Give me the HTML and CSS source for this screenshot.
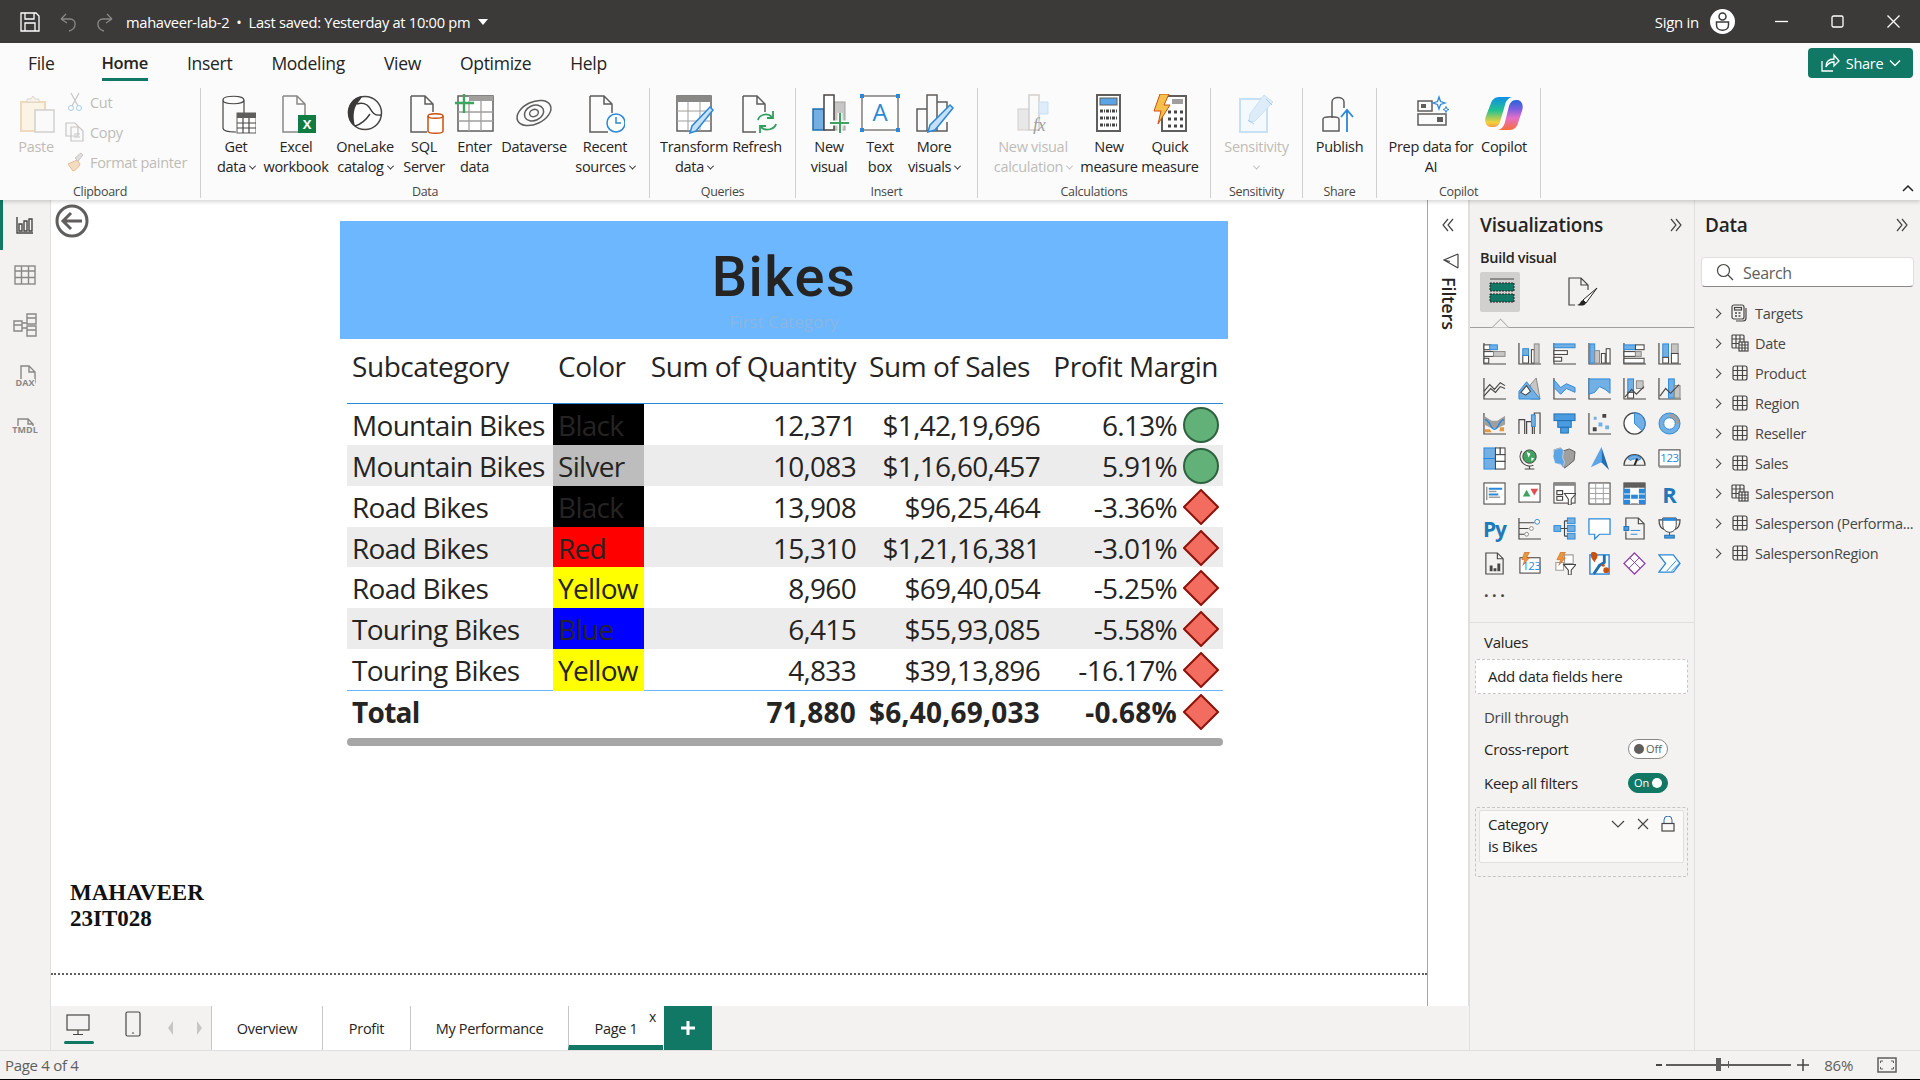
FILE: index.html
```html
<!DOCTYPE html>
<html lang="en">
<head>
  <meta charset="utf8"/>
  <title>mahaveer-lab-2</title>
  <link rel="stylesheet" href="styles.css">
</head>
<body>
<svg class="defs" width="0" height="0">
  <defs>
    <symbol id="tbl" viewBox="0 0 16 16"><rect class="d" x="1" y="1" width="14" height="14" rx="2"/><path class="d" d="M1 5.5h14M1 10.5h14M5.5 1v14M10.5 1v14"/></symbol>
    <symbol id="tcalc" viewBox="0 0 18 18"><rect class="d" x="1" y="1" width="12" height="13" rx="1"/><path class="d" d="M1 5h12M1 9.500h12M5 1v13M9 1v13"/><rect class="wd" x="8" y="8" width="9" height="9"/><path class="d" d="M8 11h9M8 14h9M11 8v9M14 8v9"/></symbol>
    <symbol id="dbl" viewBox="0 0 16 16"><path class="d" d="M3 2l5 6-5 6M8 2l5 6-5 6"/></symbol>
    <symbol id="ok" viewBox="0 0 36 36"><circle cx="18" cy="18" r="17" fill="#61b178" stroke="#2f6241" stroke-width="2"/></symbol>
    <symbol id="bad" viewBox="0 0 36 36"><path d="M18 1l17 17-17 17L1 18z" fill="#f26d5f" stroke="#8f1209" stroke-width="2"/></symbol>
    <linearGradient id="copl" x1="0" y1="0" x2="0" y2="1"><stop offset="0" stop-color="#0e8fe8"/><stop offset=".45" stop-color="#24c28f"/><stop offset=".85" stop-color="#f5d13c"/><stop offset="1" stop-color="#f59a4a"/></linearGradient>
    <linearGradient id="copr" x1="0" y1="0" x2="0" y2="1"><stop offset="0" stop-color="#2563d8"/><stop offset=".3" stop-color="#7a5fe0"/><stop offset=".6" stop-color="#e56fc8"/><stop offset="1" stop-color="#f5703a"/></linearGradient>
  </defs>
</svg>

<div class="app">
  <header class="titlebar">
    <svg class="t-save" width="20" height="20" viewBox="0 0 20 20"><path class="tw" d="M1 1h15l3 3v15H1zM5 1v6h9V1M5 19v-8h10v8"/></svg>
    <svg class="t-undo" width="16" height="20" viewBox="0 0 16 20"><path class="tg" d="M1 7l5-5M1 7l6 4M1 7h9c7 0 7 10-1 12"/></svg>
    <svg class="t-redo" width="16" height="20" viewBox="0 0 16 20"><path class="tg" d="M15 7l-5-5M15 7l-6 4M15 7H6c-7 0-7 10 1 12"/></svg>
    <span class="t-name">mahaveer-lab-2 &nbsp;•&nbsp; Last saved: Yesterday at 10:00 pm</span>
    <span class="t-caret"></span>
    <span class="t-sign">Sign in</span>
    <svg class="t-user" width="25" height="25" viewBox="0 0 25 25"><circle cx="12.500" cy="12.500" r="12.500" fill="#fff"/><circle cx="12.500" cy="7.500" r="3.500" fill="none" stroke="#3b3a39" stroke-width="1.500"/><path d="M6.500 13h12v3c0 7-12 7-12 0z" fill="none" stroke="#3b3a39" stroke-width="1.500"/></svg>
    <svg class="t-min" width="13" height="13" viewBox="0 0 13 13"><path class="tw" d="M0 6.500h13"/></svg>
    <svg class="t-max" width="13" height="13" viewBox="0 0 13 13"><rect class="tw" x="1" y="1" width="11" height="11" rx="1.500"/></svg>
    <svg class="t-close" width="13" height="13" viewBox="0 0 13 13"><path class="tw" d="M.5.500l12 12M12.500.500l-12 12"/></svg>
  </header>

  <section class="ribbon">
    <nav class="rtabs">
      <span class="rtab rtab-file">File</span>
      <span class="rtab on">Home</span>
      <span class="rtab">Insert</span>
      <span class="rtab">Modeling</span>
      <span class="rtab">View</span>
      <span class="rtab">Optimize</span>
      <span class="rtab">Help</span>
      <button class="share">
        <svg width="20" height="20" viewBox="0 0 20 20"><path class="tw" d="M2 8v10h11M6 14c0-6 4-8 8-8V2l5 6-5 5V9c-3 0-6 1-8 5z"/></svg>
        Share
        <svg width="12" height="12" viewBox="0 0 12 12"><path class="tw" d="M1 3.500l5 5 5-5"/></svg>
      </button>
    </nav>
    <div class="groups">
      <div class="grp g-clip">
        <div class="grp-body">
          <div class="item off w40">
            <svg class="ic" width="40" height="40" viewBox="0 0 40 40"><rect x="5" y="8" width="24" height="29" fill="#fbf3e6" stroke="#efd9b8" stroke-width="2"/><path d="M11 8V5h4l2-3 2 3h4v3z" fill="#fbf3e6" stroke="#d8d6d4"/><rect x="19" y="16" width="19" height="22" fill="#fafafa" stroke="#d2d0ce" stroke-width="1.500"/></svg>
            <span class="ln">Paste</span>
          </div>
          <div class="minis off">
            <div class="mini"><svg width="20" height="20" viewBox="0 0 20 20"><path d="M6 1l7 13M14 1L7 14" fill="none" stroke="#c8c6c4" stroke-width="1.200"/><circle cx="6" cy="16" r="2.500" fill="none" stroke="#a9cbe6"/><circle cx="14" cy="16" r="2.500" fill="none" stroke="#a9cbe6"/></svg>Cut</div>
            <div class="mini"><svg width="20" height="20" viewBox="0 0 20 20"><path d="M1 1h9l3 3v10H1z M6 5h8l4 4v10H6z" fill="#fafafa" stroke="#c8c6c4" stroke-width="1.200"/><path d="M9 12h6M9 15h6" stroke="#c8c6c4"/></svg>Copy</div>
            <div class="mini"><svg width="20" height="20" viewBox="0 0 20 20"><path d="M12 8l-9 4 5 7c3-1 6-4 7-7z" fill="#f3dcc0" stroke="#e6bd92"/><path d="M13 9l5-6-2-2-6 5z" fill="#e1dfdd" stroke="#c8c6c4"/></svg>Format painter</div>
          </div>
        </div>
        <div class="grp-label">Clipboard</div>
      </div>

      <div class="grp g-data">
        <div class="grp-body">
          <div class="item w50">
            <svg class="ic" width="40" height="40" viewBox="0 0 40 40"><path class="k" d="M7 6c0-5 21-5 21 0M7 6c0 5 21 5 21 0M28 6v13M7 6v28c0 3 7 4 13 4"/><rect x="21" y="19" width="19" height="20" fill="#fff" stroke="#605e5c"/><rect x="21" y="19" width="19" height="5" fill="#605e5c"/><path class="k" d="M27 24v15M33 24v15M21 29h19M21 34h19"/></svg>
            <span class="ln">Get</span><span class="ln">data<i class="dn"></i></span>
          </div>
          <div class="item w70">
            <svg class="ic" width="40" height="40" viewBox="0 0 40 40"><path d="M7 2h14l8 8v12M7 2v36h15M21 2v8h8" fill="none" stroke="#8a8886" stroke-width="1.500"/><rect x="22" y="21" width="18" height="18" fill="#107c41"/><text class="xl" x="31" y="35">X</text></svg>
            <span class="ln">Excel</span><span class="ln">workbook</span>
          </div>
          <div class="item w68">
            <svg class="ic" width="40" height="40" viewBox="0 0 40 40"><circle cx="20" cy="19" r="16.500" fill="#fff" stroke="#484644" stroke-width="1.500"/><path d="M17 2C8 3 2 11 3 21c1 5 4 9 7 11-2-8-2-16 2-22 2-3 5-6 5-8z" fill="#3b3a39"/><path d="M12 10c5-2 10 0 12 3 3 5 5 9 12 8M10 32c7-2 11-6 15-12" fill="none" stroke="#3b3a39" stroke-width="1.400"/></svg>
            <span class="ln">OneLake</span><span class="ln">catalog<i class="dn"></i></span>
          </div>
          <div class="item w50">
            <svg class="ic" width="40" height="40" viewBox="0 0 40 40"><path class="k2" d="M7 2h14l8 8v8M7 2v36h16M21 2v8h8"/><path d="M24 22c0-3 15-3 15 0v15c0 3-15 3-15 0z" fill="#fff" stroke="#ca5010" stroke-width="1.500"/><path d="M24 22c0 3 15 3 15 0" fill="none" stroke="#ca5010" stroke-width="1.500"/></svg>
            <span class="ln">SQL</span><span class="ln">Server</span>
          </div>
          <div class="item w51">
            <svg class="ic" width="40" height="40" viewBox="0 0 40 40"><rect x="3" y="2" width="35" height="35" fill="#fff" stroke="#605e5c" stroke-width="1.500"/><rect x="14" y="2" width="24" height="5" fill="#a19f9d"/><path d="M3 18h35M3 27h35M14 7v30M26 7v30" fill="none" stroke="#a19f9d" stroke-width="1.300"/><path d="M0 9h19M9 0v19" stroke="#3fa45f" stroke-width="2.400"/></svg>
            <span class="ln">Enter</span><span class="ln">data</span>
          </div>
          <div class="item w68">
            <svg class="ic" width="40" height="40" viewBox="0 0 40 40"><g transform="rotate(-25 20 19)" fill="none" stroke="#605e5c" stroke-width="1.500"><ellipse cx="20" cy="19" rx="18" ry="11"/><ellipse cx="20" cy="19" rx="10" ry="7.500"/><ellipse cx="20" cy="19" rx="4.500" ry="3.500"/></g></svg>
            <span class="ln">Dataverse</span>
          </div>
          <div class="item w74">
            <svg class="ic" width="40" height="40" viewBox="0 0 40 40"><path class="k2" d="M5 2h14l8 8v9M5 2v36h18M19 2v8h8"/><circle cx="31" cy="29" r="9" fill="#fff" stroke="#2b88d8" stroke-width="1.500"/><path d="M31 23v6h5" fill="none" stroke="#2b88d8" stroke-width="1.500"/></svg>
            <span class="ln">Recent</span><span class="ln">sources<i class="dn"></i></span>
          </div>
        </div>
        <div class="grp-label">Data</div>
      </div>

      <div class="grp g-query">
        <div class="grp-body">
          <div class="item w76">
            <svg class="ic" width="40" height="40" viewBox="0 0 40 40"><rect x="3" y="2" width="34" height="35" fill="#fff" stroke="#605e5c" stroke-width="1.500"/><rect x="3" y="2" width="34" height="6" fill="#8a8886"/><path d="M3 17h34M3 27h34M14 8v29M26 8v29" fill="none" stroke="#a19f9d"/><path d="M36 13l3 3-17 21-6 2 2-7z" fill="#c7e0f4" stroke="#2b88d8" stroke-width="1.500"/></svg>
            <span class="ln">Transform</span><span class="ln">data<i class="dn"></i></span>
          </div>
          <div class="item w50">
            <svg class="ic" width="40" height="40" viewBox="0 0 40 40"><path class="k2" d="M6 2h14l8 8v8M6 2v36h13M20 2v8h8"/><path d="M21 26c1-5 9-8 14-3M39 30c-1 5-10 8-15 3" fill="none" stroke="#2f9e5f" stroke-width="1.800"/><path d="M36 17v7h-6M23 39v-7h6" fill="none" stroke="#2f9e5f" stroke-width="1.800"/></svg>
            <span class="ln">Refresh</span>
          </div>
        </div>
        <div class="grp-label">Queries</div>
      </div>

      <div class="grp g-insert">
        <div class="grp-body">
          <div class="item w46">
            <svg class="ic" width="40" height="40" viewBox="0 0 40 40"><rect x="25" y="8" width="11" height="28" fill="#c8c6c4" stroke="#a19f9d"/><rect x="4" y="15" width="11" height="21" fill="#71afe5" stroke="#1f6fb2" stroke-width="1.500"/><rect x="15" y="1" width="10" height="35" fill="#fff" stroke="#484644" stroke-width="1.500"/><path d="M21 29h20M31 19v20" stroke="#fbfbfb" stroke-width="5"/><path d="M21 29h20M31 19v20" stroke="#3fa45f" stroke-width="2"/></svg>
            <span class="ln">New</span><span class="ln">visual</span>
          </div>
          <div class="item w56">
            <svg class="ic" width="40" height="40" viewBox="0 0 40 40"><rect x="2" y="2" width="36" height="34" fill="#fff" stroke="#605e5c" stroke-width="1.200"/><path d="M0 0h4v4H0zM36 0h4v4h-4zM0 34h4v4H0zM36 34h4v4h-4z" fill="#2b88d8"/><text class="a" x="20" y="27">A</text></svg>
            <span class="ln">Text</span><span class="ln">box</span>
          </div>
          <div class="item w52">
            <svg class="ic" width="40" height="40" viewBox="0 0 40 40"><path class="k2" d="M3 15h10v22H3zM13 37V1h10v36zM23 8h10v7M23 37h10V28"/><path d="M36 11l3 3-18 22-7 2 2-7z" fill="#c7e0f4" stroke="#2b88d8" stroke-width="1.500"/></svg>
            <span class="ln">More</span><span class="ln">visuals<i class="dn"></i></span>
          </div>
        </div>
        <div class="grp-label">Insert</div>
      </div>

      <div class="grp g-calc">
        <div class="grp-body">
          <div class="item w94 off">
            <svg class="ic" width="40" height="40" viewBox="0 0 40 40"><rect x="5" y="15" width="11" height="21" fill="#e8e8e8" stroke="#d2d0ce"/><rect x="16" y="1" width="10" height="35" fill="#fafafa" stroke="#d2d0ce" stroke-width="1.500"/><path d="M26 8h9v12h-9z" fill="#deecf9" stroke="#c7e0f4"/><text class="fx" x="20" y="37">fx</text></svg>
            <span class="ln">New visual</span><span class="ln">calculation<i class="dn"></i></span>
          </div>
          <div class="item w58">
            <svg class="ic" width="40" height="40" viewBox="0 0 40 40"><rect x="8" y="1" width="23" height="36" fill="#fff" stroke="#605e5c" stroke-width="2"/><rect x="11" y="4" width="17" height="7" fill="#5ba4e6" stroke="#605e5c"/><path class="dots" d="M11 17h5M17 17h5M23 17h5M11 24h5M17 24h5M23 24h5M11 31h5M17 31h5M23 31h5"/></svg>
            <span class="ln">New</span><span class="ln">measure</span>
          </div>
          <div class="item w64">
            <svg class="ic" width="40" height="40" viewBox="0 0 40 40"><rect x="12" y="2" width="24" height="35" fill="#fff" stroke="#605e5c" stroke-width="2"/><rect x="22" y="5" width="11" height="5" fill="#a19f9d"/><path class="dots" d="M18 18h4M24 18h4M30 18h4M18 25h4M24 25h4M30 25h4M18 32h4M24 32h4M30 32h4"/><path d="M10 0h9l-5 11h6L8 30l3-13H4z" fill="#f7c04a" stroke="#ca5010"/></svg>
            <span class="ln">Quick</span><span class="ln">measure</span>
          </div>
        </div>
        <div class="grp-label">Calculations</div>
      </div>

      <div class="grp g-sens">
        <div class="grp-body center">
          <div class="item off">
            <svg class="ic" width="40" height="40" viewBox="0 0 40 40"><rect x="4" y="5" width="27" height="33" fill="#f3f9fd" stroke="#c7e0f4" stroke-width="2"/><path d="M28 1l9 7-18 19-6 1 1-8z" fill="#deecf9" stroke="#c7e0f4"/><path d="M30 5l6 6M12 26l6 4" stroke="#a9cbe6"/></svg>
            <span class="ln">Sensitivity</span><span class="ln"><i class="dn dn-solo"></i></span>
          </div>
        </div>
        <div class="grp-label">Sensitivity</div>
      </div>

      <div class="grp g-share">
        <div class="grp-body center">
          <div class="item">
            <svg class="ic" width="40" height="40" viewBox="0 0 40 40"><path class="k2" d="M13 24V8c0-6 12-6 12 0v6"/><path class="k2" d="M4 25c0-3 16-3 16 0v12H4z"/><path d="M28 38V17M22 23l6-7 6 7" fill="none" stroke="#2b88d8" stroke-width="1.800"/></svg>
            <span class="ln">Publish</span>
          </div>
        </div>
        <div class="grp-label">Share</div>
      </div>

      <div class="grp g-copilot">
        <div class="grp-body">
          <div class="item w90">
            <svg class="ic" width="40" height="40" viewBox="0 0 40 40"><rect class="k2" x="7" y="7" width="14" height="10"/><rect x="10" y="10" width="5" height="4" fill="#605e5c"/><rect class="k2" x="7" y="20" width="28" height="11"/><rect x="26" y="23" width="6" height="5" fill="#605e5c"/><path d="M28 3l1.500 4.500L34 9l-4.500 1.500L28 15l-1.500-4.500L22 9l4.500-1.500z" fill="#fff" stroke="#2b88d8" stroke-width="1.300"/><path d="M35 12.500l.8 2.200 2.200.8-2.200.8-.8 2.200-.8-2.200-2.200-.8 2.200-.8z" fill="#fff" stroke="#2b88d8"/></svg>
            <span class="ln">Prep data for</span><span class="ln">AI</span>
          </div>
          <div class="item w56">
            <svg class="ic" width="40" height="40" viewBox="0 0 40 40"><path d="M15 3h13c-4 1-6 4-7 8l-5 17c-1 3-3 5-7 5H7C2 33 0 27 2 22l5-13c1-3 4-6 8-6z" fill="url(#copl)"/><path d="M26 36H14c4-1 6-4 7-8l4-16c1-3 3-6 7-6h1c5 0 7 6 5 11l-4 12c-1 4-4 7-8 7z" fill="url(#copr)"/></svg>
            <span class="ln">Copilot</span>
          </div>
        </div>
        <div class="grp-label">Copilot</div>
      </div>
      <svg class="collapse" width="12" height="8" viewBox="0 0 12 8"><path d="M1 7l5-5 5 5" fill="none" stroke="#252423" stroke-width="1.500"/></svg>
    </div>
  </section>

  <div class="work">
    <aside class="nav">
      <div class="nav-btn on"><svg width="18" height="18" viewBox="0 0 18 18"><path class="d2" d="M1 1v16h16M3 8h3v7H3zM8 5h3v10H8zM13 3h3v12h-3z"/></svg></div>
      <div class="nav-btn"><svg width="22" height="20" viewBox="0 0 22 20"><rect class="g2" x="1" y="1" width="20" height="18"/><path class="g2" d="M1 6h20M1 12.500h20M7.500 1v18M14.500 1v18"/></svg></div>
      <div class="nav-btn"><svg width="24" height="24" viewBox="0 0 24 24"><path class="g2" d="M14 1h9v10h-9zM14 5h9M14 13h9v10h-9zM14 17h9M1 8h8v10H1zM1 12h8M9 10h5M9 15h5"/></svg></div>
      <div class="nav-btn nav-file"><svg width="24" height="24" viewBox="0 0 24 24"><path class="g2" d="M8 16V2h8l6 6v10c0 2-1 3-2 4M16 2v6h6"/></svg><span>DAX</span></div>
      <div class="nav-btn nav-file"><svg width="24" height="18" viewBox="0 0 24 18"><path class="g2" d="M5 16V2h10l5 5v9M15 2v5h5"/></svg><span>TMDL</span></div>
    </aside>

    <div class="mid">
      <div class="stage">
        <div class="canvas">
          <div class="page">
            <svg class="back" width="34" height="34" viewBox="0 0 34 34"><circle cx="17" cy="17" r="15" fill="#fff" stroke="#605e5c" stroke-width="3"/><path d="M27 17H9M16 9l-8 8 8 8" fill="none" stroke="#605e5c" stroke-width="3"/></svg>
            <div class="banner">
              <div class="banner-title">Bikes</div>
              <div class="banner-sub">First Category</div>
            </div>
            <div class="tbl">
              <div class="tr th">
                <div class="c c-sub">Subcategory</div><div class="c c-col">Color</div><div class="c c-num">Sum of Quantity</div><div class="c c-sal">Sum of Sales</div><div class="c c-pm">Profit Margin</div>
              </div>
              <div class="tr">
                <div class="c c-sub">Mountain Bikes</div><div class="c c-col swatch-black">Black</div><div class="c c-num">12,371</div><div class="c c-val">$1,42,19,696</div>
                <div class="c c-mar">6.13%<svg width="36" height="36"><use href="#ok"/></svg></div>
              </div>
              <div class="tr alt">
                <div class="c c-sub">Mountain Bikes</div><div class="c c-col swatch-silver">Silver</div><div class="c c-num">10,083</div><div class="c c-val">$1,16,60,457</div>
                <div class="c c-mar">5.91%<svg width="36" height="36"><use href="#ok"/></svg></div>
              </div>
              <div class="tr">
                <div class="c c-sub">Road Bikes</div><div class="c c-col swatch-black">Black</div><div class="c c-num">13,908</div><div class="c c-val">$96,25,464</div>
                <div class="c c-mar">-3.36%<svg width="36" height="36"><use href="#bad"/></svg></div>
              </div>
              <div class="tr alt">
                <div class="c c-sub">Road Bikes</div><div class="c c-col swatch-red">Red</div><div class="c c-num">15,310</div><div class="c c-val">$1,21,16,381</div>
                <div class="c c-mar">-3.01%<svg width="36" height="36"><use href="#bad"/></svg></div>
              </div>
              <div class="tr">
                <div class="c c-sub">Road Bikes</div><div class="c c-col swatch-yellow">Yellow</div><div class="c c-num">8,960</div><div class="c c-val">$69,40,054</div>
                <div class="c c-mar">-5.25%<svg width="36" height="36"><use href="#bad"/></svg></div>
              </div>
              <div class="tr alt">
                <div class="c c-sub">Touring Bikes</div><div class="c c-col swatch-blue">Blue</div><div class="c c-num">6,415</div><div class="c c-val">$55,93,085</div>
                <div class="c c-mar">-5.58%<svg width="36" height="36"><use href="#bad"/></svg></div>
              </div>
              <div class="tr">
                <div class="c c-sub">Touring Bikes</div><div class="c c-col swatch-yellow">Yellow</div><div class="c c-num">4,833</div><div class="c c-val">$39,13,896</div>
                <div class="c c-mar">-16.17%<svg width="36" height="36"><use href="#bad"/></svg></div>
              </div>
              <div class="tr total">
                <div class="c c-sub">Total</div><div class="c c-col"></div><div class="c c-num">71,880</div><div class="c c-val">$6,40,69,033</div>
                <div class="c c-mar">-0.68%<svg width="36" height="36"><use href="#bad"/></svg></div>
              </div>
              <div class="hscroll"></div>
            </div>
            <div class="sign">MAHAVEER<br/>23IT028</div>
          </div>
        </div>
        <div class="filters">
          <svg class="dbl" width="16" height="16"><use href="#dbl" transform="translate(16,0) scale(-1,1)"/></svg>
          <svg class="funnel" width="16" height="16" viewBox="0 0 16 16"><path class="d" d="M15 1v14M15 1L1 7l6 1.500M15 15L1 7"/></svg>
          <span class="filters-txt">Filters</span>
        </div>
      </div>

      <div class="pagebar">
        <div class="views">
          <div class="view on"><svg width="24" height="22" viewBox="0 0 24 22"><rect class="d" x="1" y="1" width="22" height="15"/><path class="d" d="M12 16v4M7 20.500h10"/></svg></div>
          <div class="view"><svg width="16" height="26" viewBox="0 0 16 26"><rect class="d" x="1" y="1" width="14" height="24" rx="1.500"/><path class="d" d="M7 22h2"/></svg></div>
          <span class="arrow arrow-l"></span><span class="arrow arrow-r"></span>
        </div>
        <div class="ptab p-over">Overview</div>
        <div class="ptab p-prof">Profit</div>
        <div class="ptab p-perf">My Performance</div>
        <div class="ptab p-one on">Page 1<span class="ptab-x">x</span></div>
        <div class="padd"><svg width="14" height="14" viewBox="0 0 14 14"><path d="M7 0v14M0 7h14" stroke="#fff" stroke-width="3"/></svg></div>
      </div>
    </div>

    <aside class="viz">
      <div class="phead"><span class="ptitle">Visualizations</span><svg width="16" height="16"><use href="#dbl"/></svg></div>
      <div class="sub">Build visual</div>
      <div class="vtabs">
        <div class="vtab on"><svg width="30" height="30" viewBox="0 0 30 30"><path d="M5 2h24" stroke="#484644"/><rect x="5" y="6" width="24" height="8" fill="#117865" stroke="#252423" stroke-dasharray="2 1"/><rect x="5" y="17" width="24" height="8" fill="#117865" stroke="#252423" stroke-dasharray="2 1"/></svg></div>
        <div class="vtab"><svg width="32" height="32" viewBox="0 0 32 32"><path class="d" d="M8 29H2V2h12l7 7v5M14 2v7h7"/><path d="M30 12L16 24l3 3z" fill="#fff" stroke="#252423"/><path d="M16 24c-3 1-2 4-6 5 4 1 8 1 9-2z" fill="#252423"/></svg></div>
      </div>
      <div class="vdiv"></div>
      <div class="vgrid">
        <svg viewBox="0 0 24 24"><path class="k" d="M1 1v22h23"/><rect class="wh" x="1" y="3" width="7" height="5"/><rect class="b" x="7" y="3" width="8" height="5"/><rect class="wh" x="1" y="10" width="10" height="5"/><rect class="g" x="11" y="10" width="12" height="5"/><rect class="wh" x="1" y="17" width="5" height="5"/></svg>
        <svg viewBox="0 0 24 24"><path class="k" d="M1 1v22h23"/><rect class="wh" x="5" y="14" width="6" height="8"/><rect class="b" x="5" y="7" width="6" height="7"/><rect class="wh" x="14" y="8" width="3" height="14"/><rect class="g" x="17" y="2" width="5" height="20"/></svg>
        <svg viewBox="0 0 24 24"><path class="k" d="M1 1v22h23"/><rect class="b" x="1" y="2" width="22" height="4"/><rect class="wh" x="1" y="9" width="14" height="4"/><rect class="wh" x="1" y="16" width="8" height="4"/></svg>
        <svg viewBox="0 0 24 24"><path class="k" d="M1 1v22h23"/><rect class="b" x="2" y="2" width="5" height="20"/><rect class="g" x="7" y="9" width="5" height="13"/><rect class="wh" x="14" y="12" width="4" height="10"/><rect class="wh" x="19" y="7" width="4" height="15"/></svg>
        <svg viewBox="0 0 24 24"><path class="k" d="M1 1v22h23"/><rect class="b" x="1" y="3" width="12" height="5"/><rect class="wh" x="13" y="3" width="9" height="5"/><rect class="wh" x="1" y="10" width="12" height="5"/><rect class="g" x="13" y="10" width="6" height="5"/><rect class="wh" x="1" y="17" width="21" height="5"/></svg>
        <svg viewBox="0 0 24 24"><path class="k" d="M1 1v22h23"/><rect class="b" x="5" y="2" width="6" height="14"/><rect class="wh" x="5" y="16" width="6" height="6"/><rect class="g" x="14" y="2" width="7" height="10"/><rect class="wh" x="14" y="12" width="7" height="10"/></svg>

        <svg viewBox="0 0 24 24"><path class="k" d="M1 1v22h23"/><path class="k" d="M1 15l6-7 5 5 6-7 5 3M1 20l7-8 5 4 5-6 5 2"/></svg>
        <svg viewBox="0 0 24 24"><path class="g" d="M13 8l6-7 4 22H13z"/><path class="b" d="M1 23V15l8-10 6 8 8 10z"/><path class="wh" d="M3 16l6-7 4 6-5 4z"/></svg>
        <svg viewBox="0 0 24 24"><path class="k" d="M1 1v22h23"/><path class="b" d="M1 3l7 8 6-4 9 4v5l-9-4-6 6-7-7z"/></svg>
        <svg viewBox="0 0 24 24"><path class="k" d="M1 1v22h23"/><path class="b" d="M1 2h22v15l-5-4-6-3-5 6-6 2z"/></svg>
        <svg viewBox="0 0 24 24"><path class="k" d="M1 1v22h23"/><rect class="b" x="5" y="2" width="6" height="14"/><rect class="wh" x="5" y="16" width="6" height="6"/><rect class="g" x="14" y="4" width="7" height="8"/><path class="k" d="M2 21l7-8 5 5 8-8"/></svg>
        <svg viewBox="0 0 24 24"><path class="k" d="M1 1v22h23"/><rect class="b" x="11" y="2" width="6" height="20"/><rect class="g" x="17" y="9" width="6" height="13"/><path class="k" d="M2 20l6-8 5 5 9-9"/></svg>

        <svg viewBox="0 0 24 24"><path class="k" d="M1 1v22h23"/><path d="M1 4l8 5h6l8-5v9l-8 4H9L1 13z" fill="#a19f9d"/><path d="M2 8c6 0 5 10 10 10s4-10 10-10" fill="none" stroke="#2b88d8" stroke-width="1.500"/><path d="M2 18h5l2 3H2zM18 16h4v4h-5z" fill="#e8973a"/></svg>
        <svg viewBox="0 0 24 24"><path class="k" d="M1 23V8h6v15M9 23V10h6v13M17 23V1h6v22"/><rect class="b" x="14" y="3" width="4" height="12"/></svg>
        <svg viewBox="0 0 24 24"><rect class="b2" x="1" y="2" width="22" height="7"/><rect class="b2" x="5" y="9" width="14" height="7"/><rect class="b2" x="8" y="16" width="8" height="6"/></svg>
        <svg viewBox="0 0 24 24"><path class="k" d="M1 1v22h23"/><path d="M5 16h4v4H5zM15 2h4v4h-4z" fill="#484644"/><path d="M11 11h4v4h-4zM18 14h4v4h-4zM6 5h3v3H6z" fill="#71afe5"/></svg>
        <svg viewBox="0 0 24 24"><circle cx="12" cy="12" r="11" fill="#fff" stroke="#484644" stroke-width="1.300"/><path class="b" d="M12 1a11 11 0 0 1 8 18.500L12 12z"/></svg>
        <svg viewBox="0 0 24 24"><circle cx="12" cy="12" r="8.500" fill="none" stroke="#71afe5" stroke-width="5"/><path d="M12 1a11 11 0 0 1 11 11h-5a6 6 0 0 0-6-6z" fill="#a19f9d"/><circle cx="12" cy="12" r="11" fill="none" stroke="#2b88d8"/><circle cx="12" cy="12" r="6" fill="#fff" stroke="#2b88d8"/></svg>

        <svg viewBox="0 0 24 24"><rect class="b" x="1" y="1" width="12" height="11"/><rect class="b" x="1" y="12" width="12" height="11"/><rect class="wh" x="13" y="1" width="5" height="7"/><rect class="wh" x="18" y="1" width="5" height="7"/><rect class="wh" x="13" y="8" width="10" height="7"/><rect class="wh" x="13" y="15" width="10" height="8"/></svg>
        <svg viewBox="0 0 24 24"><circle cx="12" cy="10" r="7" fill="#3fa45f" stroke="#484644"/><path d="M9 5l4 2-2 4zM14 11l3 1-3 3z" fill="#fff"/><path class="k" d="M4 4a10 10 0 0 0 12 15M12 20v3M7 23h10"/></svg>
        <svg viewBox="0 0 24 24"><path d="M1 3l7-2 3 3 6-2 6 3-1 9-6 5-4 3-2-4-6-1-2-7z" fill="#a19f9d" stroke="#605e5c"/><path d="M1 3l7-2 3 3-1 7 2 5-2 6-2-4-6-1-2-7z" fill="#5ba4e6" stroke="#fff" stroke-width=".500"/></svg>
        <svg viewBox="0 0 24 24"><path d="M14 0L3 21l11-5z" fill="#5ba4e6"/><path d="M14 0l8 24-8-8z" fill="#1f6fb2"/></svg>
        <svg viewBox="0 0 24 24"><path class="k" d="M1 19a11 11 0 0 1 22 0z"/><path class="b" d="M5 12a9 9 0 0 1 14 0l-3 2a6 6 0 0 0-8 0z"/><path d="M12 19l3-7" stroke="#252423" stroke-width="2"/></svg>
        <svg viewBox="0 0 24 24"><rect class="wh" x="1" y="3" width="22" height="17"/><path d="M1 21h22" stroke="#a19f9d" stroke-width="2"/><text class="n123" x="12" y="16">123</text></svg>

        <svg viewBox="0 0 24 24"><rect class="wh" x="1" y="1" width="22" height="22"/><path d="M4 5v14" stroke="#605e5c"/><path d="M6 7h14M6 13h10" stroke="#2b88d8" stroke-width="2"/><path d="M6 10h8M6 16h12" stroke="#a19f9d" stroke-width="1.500"/></svg>
        <svg viewBox="0 0 24 24"><rect class="wh" x="1" y="2" width="22" height="19"/><path d="M3 21h18" stroke="#a19f9d"/><path d="M5 15l4-7 4 7z" fill="#3fa45f"/><path d="M13 7h8l-4 7z" fill="#e04f4f"/></svg>
        <svg viewBox="0 0 24 24"><rect class="wh" x="1" y="1" width="22" height="21"/><rect x="1" y="1" width="22" height="3" fill="#8a8886"/><path class="k" d="M4 9h6v4H4zM4 15h6v4H4z"/><path class="wh" d="M12 12h12l-5 6v6h-3v-6z"/></svg>
        <svg viewBox="0 0 24 24"><rect class="wh" x="1" y="1" width="22" height="22"/><path d="M1 6.500h22M1 12h22M1 17.500h22M8 1v22M16 1v22" stroke="#a19f9d"/></svg>
        <svg viewBox="0 0 24 24"><rect class="wh" x="1" y="1" width="22" height="22"/><rect x="1" y="1" width="22" height="5" fill="#605e5c"/><rect class="b3" x="1" y="7" width="7" height="16"/><rect class="b3" x="16" y="7" width="7" height="16"/><rect class="b3" x="8" y="13" width="8" height="5"/><path d="M1 12.500h22M1 18h22M8 6v17M16 6v17" stroke="#fff"/></svg>
        <span class="rr">R</span>

        <span class="py">Py</span>
        <svg viewBox="0 0 24 24"><path class="k" d="M1 1v22h23M1 6h16M1 12h10M1 18h6"/><circle cx="20" cy="5" r="2.500" fill="#fff" stroke="#2b88d8"/><circle cx="14" cy="12" r="2" fill="#fff" stroke="#8a8886"/><circle cx="9" cy="18" r="2" fill="#fff" stroke="#8a8886"/></svg>
        <svg viewBox="0 0 24 24"><rect class="b" x="1" y="9" width="7" height="6"/><rect class="b" x="15" y="1" width="8" height="6"/><rect class="b" x="15" y="9" width="8" height="6"/><rect class="b" x="15" y="17" width="8" height="6"/><path class="k" d="M8 12h7M12 4v16M12 4h3M12 20h3"/></svg>
        <svg viewBox="0 0 24 24"><path d="M1 2h22v16H12l-5 5v-5H1z" fill="#fff" stroke="#2b88d8" stroke-width="1.300"/></svg>
        <svg viewBox="0 0 24 24"><path class="k" d="M3 10V1h13l6 6v16H3V15M16 1v6h6"/><path d="M8 14h10M8 18h7" stroke="#2b88d8"/><rect class="b2" x="1" y="10" width="5" height="4"/></svg>
        <svg viewBox="0 0 24 24"><path class="k" d="M5 3H1c0 6 2 9 6 10M19 3h4c0 6-2 9-6 10"/><path d="M5 1h14v8a7 7 0 0 1-14 0z" fill="#fff" stroke="#484644"/><path d="M5 1h14v3H5z" fill="#2b88d8"/><path d="M12 16v3" stroke="#484644"/><rect class="b2" x="7" y="19" width="10" height="3"/></svg>

        <svg viewBox="0 0 24 24"><path class="k" d="M3 1h12l6 6v16H3zM15 1v6h6"/><path d="M7 14h3v6H7zM11 17h3v3h-3zM15 12h3v8h-3z" fill="#484644"/></svg>
        <svg viewBox="0 0 24 24"><rect class="wh" x="2" y="6" width="21" height="16"/><text class="n123" x="14" y="19">123</text><path d="M7 0h5l-3 6h3L5 14l2-6H4z" fill="#e8973a" stroke="#ca5010" stroke-width=".500"/></svg>
        <svg viewBox="0 0 24 24"><path class="g3" d="M3 11h8v8H3zM12 3h9v9h-9z"/><path class="wh" d="M11 13h13l-5 6v5h-3v-5z"/><path d="M8 0h5l-3 6h3L6 14l2-6H4z" fill="#e8973a" stroke="#ca5010" stroke-width=".500"/></svg>
        <svg viewBox="0 0 24 24"><rect x="2" y="3" width="20" height="20" fill="#fff" stroke="#2b88d8" stroke-width="1.500"/><path d="M6 23l6-9 5-3V3" fill="none" stroke="#1f6fb2" stroke-width="3"/><path d="M5 0c4 0 5 2 5 4 0 3-3 5-3 7-1-2-4-4-4-7 0-2 0-4 2-4z" fill="#ca5010"/><circle cx="19" cy="19" r="3" fill="#ca5010"/><circle cx="16" cy="14" r="1.500" fill="#ca5010"/></svg>
        <svg viewBox="0 0 24 24"><path d="M12 1l11 11-11 11L1 12z" fill="#fff" stroke="#8f3fa8" stroke-width="1.300"/><path d="M7 6l11 11M17 6L6 17" stroke="#8f3fa8"/></svg>
        <svg viewBox="0 0 24 24"><path d="M1 3h15l7 9-7 9H1l7-9z" fill="#fff" stroke="#2b88d8" stroke-width="1.300"/><path d="M9 20l10-11M14 20L22 12" stroke="#2b88d8"/></svg>
      </div>
      <div class="vmore">. . .</div>
      <div class="vdiv2"></div>
      <div class="lbl lbl-values">Values</div>
      <div class="well well-add">Add data fields here</div>
      <div class="lbl lbl-drill">Drill through</div>
      <div class="lbl trow trow-1">Cross-report<span class="tog"><i></i>Off</span></div>
      <div class="lbl trow trow-2">Keep all filters<span class="tog tog-on">On<i></i></span></div>
      <div class="well well-filter">
        <div class="fcard">
          <div class="fcard-top">Category
            <svg class="fc1" width="14" height="14" viewBox="0 0 14 14"><path class="d" d="M1 4l6 6 6-6"/></svg>
            <svg width="12" height="12" viewBox="0 0 12 12"><path class="d" d="M1 1l10 10M11 1L1 11"/></svg>
            <svg width="14" height="16" viewBox="0 0 14 16"><path d="M3 7V4a4 4 0 0 1 8 0v3" fill="none" stroke="#2b6cb0"/><rect class="d" x="1" y="7.500" width="12" height="7.500"/></svg>
          </div>
          <div class="fcard-val">is Bikes</div>
        </div>
      </div>
    </aside>

    <aside class="data">
      <div class="phead"><span class="ptitle">Data</span><svg width="16" height="16"><use href="#dbl"/></svg></div>
      <div class="search">
        <svg width="18" height="18" viewBox="0 0 18 18"><circle cx="7.500" cy="7.500" r="6" fill="none" stroke="#484644" stroke-width="1.200"/><path d="M12 12l5 5" stroke="#484644" stroke-width="1.200"/></svg>
        <span>Search</span>
      </div>
      <ul class="fields">
        <li><i class="chev"></i><svg width="18" height="18" viewBox="0 0 18 18"><rect class="d" x="1" y="1" width="12" height="14" rx="2"/><rect class="d" x="3.500" y="3.500" width="7" height="2.500"/><path class="dots2" d="M4 9h2M7.500 9h2M4 12h2M7.500 12h2"/><path class="d" d="M15 4v10c0 2-1 3-3 3H5"/></svg>Targets</li>
        <li><i class="chev"></i><svg width="18" height="18"><use href="#tcalc"/></svg>Date</li>
        <li><i class="chev"></i><svg width="16" height="16" class="tb"><use href="#tbl"/></svg>Product</li>
        <li><i class="chev"></i><svg width="16" height="16" class="tb"><use href="#tbl"/></svg>Region</li>
        <li><i class="chev"></i><svg width="16" height="16" class="tb"><use href="#tbl"/></svg>Reseller</li>
        <li><i class="chev"></i><svg width="16" height="16" class="tb"><use href="#tbl"/></svg>Sales</li>
        <li><i class="chev"></i><svg width="18" height="18"><use href="#tcalc"/></svg>Salesperson</li>
        <li><i class="chev"></i><svg width="16" height="16" class="tb"><use href="#tbl"/></svg>Salesperson (Performa...</li>
        <li><i class="chev"></i><svg width="16" height="16" class="tb"><use href="#tbl"/></svg>SalespersonRegion</li>
      </ul>
    </aside>
  </div>

  <footer class="status">
    <span class="s-page">Page 4 of 4</span>
    <span class="s-minus"></span>
    <div class="s-slider"><i class="s-thumb"></i><i class="s-tick"></i></div>
    <svg class="s-plus" width="12" height="12" viewBox="0 0 12 12"><path d="M6 0v12M0 6h12" stroke="#484644" stroke-width="1.500"/></svg>
    <span class="s-pct">86%</span>
    <svg class="s-fit" width="20" height="16" viewBox="0 0 20 16"><rect x="1" y="1" width="18" height="14" fill="#f3f2f1" stroke="#605e5c" stroke-width="1.500"/><path d="M6 4H3.500v2M14 4h2.500v2M6 12H3.500v-2M14 12h2.500v-2" fill="none" stroke="#605e5c"/></svg>
  </footer>
</div>
</body>
</html>
```

FILE: styles.css
```css
* { box-sizing: border-box; }
html, body { margin: 0; padding: 0; }
body { font-family: "Open Sans", "Noto Sans", sans-serif; font-size: 14px; color: #252423; background: #f3f2f1; letter-spacing: -0.3px; }
.defs { position: absolute; }
i { font-style: normal; }
svg { display: block; flex: none; }
.app { width: 1920px; height: 1080px; display: flex; flex-direction: column; overflow: hidden; }

/* shared strokes */
.k { fill: none; stroke: #484644; stroke-width: 1.200; }
.k2 { fill: none; stroke: #605e5c; stroke-width: 1.500; }
.d { fill: none; stroke: #484644; stroke-width: 1.200; }
.wd { fill: #fff; stroke: #484644; stroke-width: 1.200; }
.d2 { fill: none; stroke: #484644; stroke-width: 1.400; }
.g2 { fill: none; stroke: #8a8886; stroke-width: 1.400; }
.g3 { fill: #fff; stroke: #a19f9d; stroke-width: 1.200; }
.tw { fill: none; stroke: #fff; stroke-width: 1.300; }
.tg { fill: none; stroke: #8a8886; stroke-width: 1.300; }
.wh { fill: #fff; stroke: #484644; stroke-width: 1.100; }
.b { fill: #71afe5; stroke: #2b88d8; stroke-width: 1; }
.b2 { fill: #4a9be0; stroke: #1f6fb2; stroke-width: 1; }
.b3 { fill: #2b88d8; }
.g { fill: #c8c6c4; stroke: #8a8886; stroke-width: 1; }
.dots { fill: none; stroke: #484644; stroke-width: 3; stroke-dasharray: 3 1; }
.dots2 { fill: none; stroke: #484644; stroke-width: 1.600; }
.xl { font: 700 13px "Open Sans", sans-serif; fill: #fff; text-anchor: middle; }
.a { font: 400 24px "Open Sans", sans-serif; fill: #2b88d8; text-anchor: middle; }
.fx { font: italic 400 18px "Liberation Serif", serif; fill: #a19f9d; }
.n123 { font: 400 12px "Open Sans", sans-serif; fill: #2b88d8; text-anchor: middle; letter-spacing: -0.5px; }
.rr { font-size: 22px; font-weight: 700; line-height: 24px; color: #1f7ab8; letter-spacing: 0; }
.py { font-size: 21px; font-weight: 700; line-height: 24px; color: #1f7ab8; letter-spacing: -1px; }

/* title bar */
.titlebar { height: 43px; flex: none; background: #3b3a39; color: #fff; display: flex; align-items: center; padding-left: 20px; }
.t-undo { margin-left: 20px; }
.t-redo { margin-left: 21px; }
.t-name { margin-left: 13px; font-size: 14.700px; white-space: nowrap; }
.t-caret { margin-left: 8px; border: 5px solid transparent; border-top: 6px solid #fff; border-bottom: 0; }
.t-sign { margin-left: auto; font-size: 15px; }
.t-user { margin-left: 11px; }
.t-min { margin-left: 40px; }
.t-max { margin-left: 43px; }
.t-close { margin-left: 43px; margin-right: 20px; }

/* ribbon */
.ribbon { height: 157px; flex: none; background: #fbfbfb; box-shadow: 0 2px 4px rgba(0,0,0,.16); position: relative; z-index: 2; }
.rtabs { height: 45px; display: flex; align-items: flex-start; gap: 39px; padding-left: 28px; font-size: 17.500px; }
.rtab { height: 38px; padding-top: 9px; line-height: 22px; white-space: nowrap; }
.rtab.on { font-size: 16.500px; font-weight: 600; border-bottom: 3px solid #117865; }
.rtab-file { margin-right: 8px; }
.share { margin: 5px 7px 0 auto; width: 105px; height: 30px; border: 0; border-radius: 4px; background: #117865; color: #fff; font: inherit; font-size: 14.500px; letter-spacing: -0.3px; display: flex; align-items: center; justify-content: center; gap: 6px; }
.groups { height: 110px; display: flex; position: relative; }
.grp { display: flex; flex-direction: column; border-right: 1px solid #d2d0ce; height: 110px; }
.g-clip { width: 201px; }
.g-data { width: 449px; }
.g-query { width: 146px; }
.g-insert { width: 182px; }
.g-calc { width: 233px; }
.g-sens { width: 92px; }
.g-share { width: 74px; }
.g-copilot { width: 164px; }
.grp-body { flex: 1; display: flex; padding-top: 6px; }
.grp-body.center { justify-content: center; }
.g-clip .grp-body { padding-left: 16px; }
.g-data .grp-body { padding-left: 10px; }
.g-query .grp-body { padding-left: 6px; }
.g-insert .grp-body { padding-left: 10px; }
.g-calc .grp-body { padding-left: 8px; }
.g-copilot .grp-body { padding-left: 9px; }
.grp-label { height: 12px; line-height: 12px; text-align: center; font-size: 12.500px; color: #484644; white-space: nowrap; }
.item { display: flex; flex-direction: column; align-items: center; font-size: 14.500px; }
.ic { margin-bottom: 3px; }
.ln { height: 20px; line-height: 20px; white-space: nowrap; display: flex; align-items: center; }
.off { color: #bebbb8; }
.dn { width: 5px; height: 5px; margin-left: 4px; border-right: 1.300px solid currentColor; border-bottom: 1.300px solid currentColor; transform: rotate(45deg) translate(-1px, -1px); display: block; }
.dn-solo { margin-left: 0; }
.w40 { width: 40px; } .w46 { width: 46px; } .w50 { width: 50px; } .w51 { width: 51px; } .w52 { width: 52px; }
.w56 { width: 56px; } .w58 { width: 58px; } .w64 { width: 64px; } .w68 { width: 68px; } .w70 { width: 70px; }
.w74 { width: 74px; } .w76 { width: 76px; } .w90 { width: 90px; } .w94 { width: 94px; }
.minis { margin-left: 9px; margin-top: -7px; }
.mini { height: 30px; display: flex; align-items: center; gap: 5px; font-size: 14.500px; white-space: nowrap; }
.collapse { position: absolute; right: 6px; top: 96px; }

/* work area */
.work { flex: 1; display: flex; min-height: 0; }
.nav { width: 51px; flex: none; background: #f3f2f1; border-right: 1px solid #e1dfdd; display: flex; flex-direction: column; }
.nav-btn { height: 50px; display: flex; flex-direction: column; align-items: center; justify-content: center; position: relative; }
.nav-btn.on::before { content: ""; position: absolute; left: 0; top: 0; bottom: 0; width: 3px; background: #117865; }
.nav-file { color: #8a8886; font-size: 9px; font-weight: 700; line-height: 8px; letter-spacing: 0; }
.nav-file span { margin-top: -9px; background: #f3f2f1; padding: 0 1px; }

.mid { width: 1418px; flex: none; display: flex; flex-direction: column; }
.stage { flex: 1; display: flex; background: #fff; min-height: 0; }
.canvas { width: 1377px; flex: none; border-right: 1px solid #a6a6a6; }
.page { height: 775px; position: relative; border-bottom: 2px dotted #605e5c; }
.back { position: absolute; left: 4px; top: 4px; }
.banner { position: absolute; left: 289px; top: 21px; width: 888px; height: 118px; background: #6cb7ff; display: flex; flex-direction: column; align-items: center; letter-spacing: 0; }
.banner-title { font-family: Roboto, sans-serif; font-weight: 500; font-size: 56px; line-height: 60px; margin-top: 26px; letter-spacing: 1.500px; }
.banner-sub { font-size: 17px; line-height: 22px; margin-top: 4px; color: #8ab6df; }
.tbl { position: absolute; left: 296px; top: 139px; width: 876px; font-size: 28px; letter-spacing: -0.7px; }
.tr { display: grid; grid-template-columns: 206px 91px 218px 183px 178px; height: 40.860px; align-items: stretch; }
.c { line-height: 42px; white-space: nowrap; padding: 0 5px; }
.th { height: 65px; border-bottom: 1px solid #2b88d8; letter-spacing: -0.45px; }
.th .c { line-height: 54px; }
.alt { background: #ececec; }
.c-num, .c-val { text-align: right; }
.c-num { padding-right: 6px; }
.c-sal { text-align: right; padding-right: 15px; }
.c-pm { text-align: right; padding-right: 5px; }
.c-mar { display: flex; justify-content: flex-end; align-items: center; gap: 6px; padding-right: 4px; }
.swatch-black { background: #000; }
.swatch-silver { background: #bdbdbd; }
.swatch-red { background: #f00; }
.swatch-yellow { background: #ff0; }
.swatch-blue { background: #00f; }
.total { border-top: 1px solid #6cb7ff; font-weight: 700; }
.total .c-num, .total .c-val, .total .c-mar { letter-spacing: 0.250px; }
.hscroll { height: 8px; margin-top: 7px; border-radius: 4px; background: #a6a6a6; }
.sign { position: absolute; left: 19px; top: 680px; font-family: "Liberation Serif", serif; font-weight: 700; font-size: 23px; line-height: 26px; letter-spacing: 0; color: #111; }

.filters { width: 41px; flex: none; border-right: 1px solid #e1dfdd; display: flex; flex-direction: column; align-items: center; padding-top: 17px; }
.funnel { margin-top: 20px; margin-left: 5px; }
.filters-txt { writing-mode: vertical-rl; margin-top: 8px; margin-left: 1px; font-size: 18px; font-weight: 600; letter-spacing: -0.1px; }

.pagebar { height: 44px; flex: none; background: #f3f2f1; display: flex; font-size: 14.500px; }
.views { width: 87px; flex: none; position: relative; display: flex; }
.view { height: 44px; flex: none; display: flex; justify-content: center; padding-top: 8px; }
.view:first-child { width: 46px; padding-left: 8px; }
.view.on::after { content: ""; position: absolute; left: 13px; width: 30px; height: 3px; top: 35px; border-radius: 2px; background: #117865; }
.view:nth-child(2) { margin-left: 28px; padding-top: 5px; }
.arrow { position: absolute; top: 15px; border: 4px solid transparent; border-top-width: 7px; border-bottom-width: 7px; }
.arrow-l { left: 117px; border-right: 5px solid #c8c6c4; border-left: 0; }
.arrow-r { left: 146px; border-left: 5px solid #c8c6c4; border-right: 0; }
.ptab { background: #fff; border-left: 1px solid #c8c6c4; display: flex; align-items: center; justify-content: center; white-space: nowrap; position: relative; }
.p-over { width: 111px; margin-left: 73px; }
.p-prof { width: 88px; }
.p-perf { width: 158px; }
.p-one { width: 95px; border-bottom: 5px solid #117865; padding-top: 5px; }
.ptab-x { position: absolute; right: 7px; top: 1px; font-size: 14px; }
.padd { width: 49px; background: #117865; display: flex; align-items: center; justify-content: center; border-left: 1px solid #fff; }

.viz { width: 226px; flex: none; background: #f3f2f1; border-left: 1px solid #e1dfdd; border-right: 1px solid #e1dfdd; }
.phead { height: 50px; display: flex; align-items: center; justify-content: space-between; padding: 0 10px; }
.ptitle { font-size: 19px; font-weight: 600; letter-spacing: -0.2px; }
.sub { margin: 0 10px; height: 16px; line-height: 16px; font-size: 14.500px; font-weight: 600; }
.vtabs { display: flex; margin: 6px 0 0 10px; height: 40px; }
.vtab { width: 40px; height: 40px; border-radius: 2px; display: flex; align-items: center; justify-content: center; }
.vtab.on { background: #d2d0ce; }
.vtab:nth-child(2) { margin-left: 43px; }
.vdiv { margin-top: 15px; height: 1px; background: #a19f9d; position: relative; }
.vdiv::after { content: ""; position: absolute; left: 24px; top: -6px; width: 12px; height: 12px; transform: rotate(45deg); background: #f3f2f1; border-left: 1px solid #a19f9d; border-top: 1px solid #a19f9d; clip-path: polygon(0 0, 100% 0, 0 100%); }
.vgrid { margin: 8px 0 0 7px; display: grid; grid-template-columns: repeat(6, 35px); grid-auto-rows: 35px; place-items: center; }
.vgrid svg { width: 23px; height: 23px; }
.vmore { height: 30px; margin-left: 14px; line-height: 20px; font-size: 16px; font-weight: 700; color: #484644; }
.vdiv2 { margin-top: 11px; height: 1px; background: #e1dfdd; }
.lbl { height: 20px; line-height: 20px; margin: 0 10px 0 14px; font-size: 15px; }
.lbl-values { margin-top: 10px; line-height: 18px; }
.well { margin: 6px 6px 0 5px; border: 1px dashed #c8c6c4; border-radius: 2px; }
.well-add { height: 35px; background: #fff; line-height: 33px; padding-left: 12px; font-size: 15px; }
.lbl-drill { margin-top: 14px; color: #484644; line-height: 18px; }
.trow { display: flex; justify-content: space-between; align-items: center; margin-right: 26px; }
.trow-1 { margin-top: 11px; }
.trow-2 { margin-top: 14px; }
.tog { width: 40px; height: 20px; border-radius: 10px; border: 1px solid #8a8886; background: #fff; font-size: 11px; display: flex; align-items: center; justify-content: space-between; padding: 0 5px; color: #605e5c; letter-spacing: 0; }
.tog i { width: 10px; height: 10px; border-radius: 50%; background: #605e5c; }
.tog-on { background: #117865; border-color: #117865; color: #fff; }
.tog-on i { background: #fff; }
.well-filter { height: 70px; margin-top: 14px; padding: 2px 3px; }
.fcard { height: 53px; background: #faf9f8; border: 1px solid #e1dfdd; border-radius: 2px; padding: 1px 8px; font-size: 15px; }
.fcard-top { display: flex; align-items: center; height: 23px; gap: 12px; }
.fc1 { margin-left: auto; }
.fcard-val { height: 23px; line-height: 23px; }

.data { flex: 1; background: #f3f2f1; }
.data .phead { padding: 0 10px; }
.search { margin: 7px 6px 0; height: 30px; background: #fff; border: 1px solid #e1dfdd; border-bottom-color: #8a8886; border-radius: 4px; display: flex; align-items: center; gap: 9px; padding-left: 14px; font-size: 16px; color: #605e5c; }
.search span { margin-top: 2px; }
.fields { list-style: none; margin: 11px 0 0; padding: 0 0 0 21px; }
.fields li { height: 30px; display: flex; align-items: center; font-size: 14.500px; color: #484644; white-space: nowrap; }
.fields svg { margin: 0 6px 0 11px; }
.fields svg.tb { margin: 0 7px 0 12px; }
.chev { width: 7px; height: 7px; flex: none; border-top: 1px solid #484644; border-right: 1px solid #484644; transform: rotate(45deg); margin-left: -3px; }

/* status bar */
.status { height: 30px; flex: none; background: #f3f2f1; border-top: 1px solid #e1dfdd; border-bottom: 1px solid #000; display: flex; align-items: center; padding-left: 5px; font-size: 15px; color: #605e5c; }
.s-page { white-space: nowrap; }
.s-minus { width: 6px; height: 1.500px; background: #484644; margin-left: auto; }
.s-slider { width: 125px; height: 1.500px; background: #605e5c; margin-left: 4px; position: relative; }
.s-thumb { position: absolute; left: 50px; top: -6px; width: 5px; height: 13px; background: #605e5c; }
.s-tick { position: absolute; left: 62px; top: -3px; width: 1px; height: 7px; background: #605e5c; }
.s-plus { margin-left: 6px; }
.s-pct { margin-left: 15px; }
.s-fit { margin-left: 24px; margin-right: 23px; }
```
